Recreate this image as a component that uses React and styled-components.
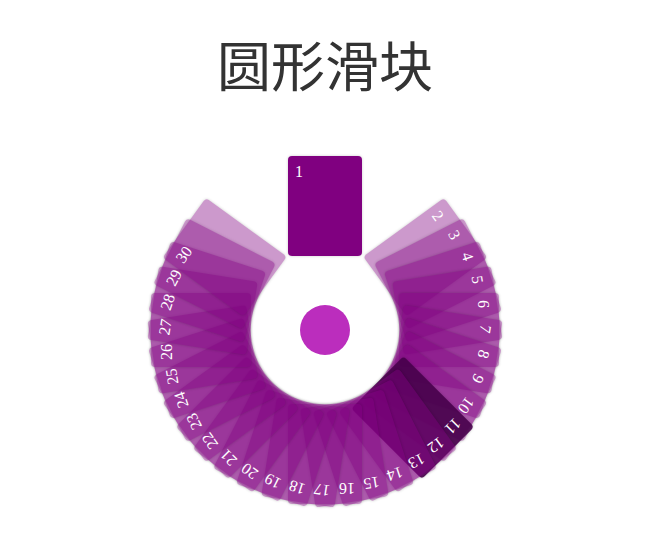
import React from "react";
import styled, { createGlobalStyle } from "styled-components";

const GlobalStyle = createGlobalStyle`
  body {
    margin: 0;
    background: #fff;
  }
`;

const Page = styled.div`
  width: 650px;
  height: 560px;
  overflow: hidden;
`;

const Title = styled.h1`
  margin: 0;
  padding-top: 34px;
  height: 60px;
  line-height: 60px;
  text-align: center;
  font-family: "Noto Sans CJK SC", sans-serif;
  font-size: 54px;
  font-weight: 400;
  color: #333;
`;

// the ring: every card turns round the same centre
const Slider = styled.div`
  position: relative;
  width: 348px;
  height: 348px;
  margin: 62px auto 0;
`;

const Card = styled.div`
  position: absolute;
  left: 137px;
  top: 0;
  width: 74px;
  height: 100px;
  box-sizing: border-box;
  padding: 8px 7px;
  border-radius: 4px;
  background: ${(p) => p.$tone};
  box-shadow: 0 0 3px rgba(0, 0, 0, 0.2);
  transform-origin: 37px 174px;
  transform: rotate(${(p) => p.$angle}deg);
  color: #fff;
  font-family: "Liberation Serif", serif;
  font-size: 16px;
  line-height: 16px;
`;

const Knob = styled.div`
  position: absolute;
  left: 149px;
  top: 149px;
  width: 50px;
  height: 50px;
  border-radius: 50%;
  background: #bb2dbd;
`;

const cards = Array.from({ length: 30 }, (_, i) => i + 1);

const toneOf = (n) => {
  if (n === 1) return "#800080";
  if (n === 11) return "rgba(70, 0, 74, 0.9)";
  return "rgba(128, 0, 128, 0.4)";
};

const angleOf = (n) => (n === 1 ? 0 : 9 * n + 36);

const App = () => {
  return (
    <Page>
      <GlobalStyle />
      <Title>圆形滑块</Title>
      <Slider>
        {cards.map((n) => (
          <Card key={n} $angle={angleOf(n)} $tone={toneOf(n)}>
            {n}
          </Card>
        ))}
        <Knob />
      </Slider>
    </Page>
  );
};

export default App;
